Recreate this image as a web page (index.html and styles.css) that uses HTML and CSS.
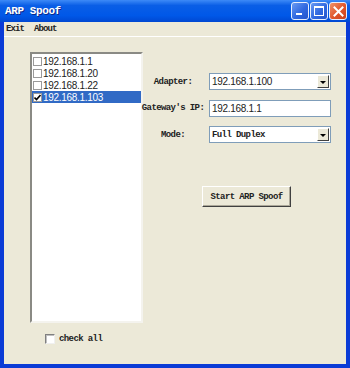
FILE: index.html
```html
<!DOCTYPE html>
<html>
<head>
  <meta charset="utf-8">
  <title>ARP Spoof</title>
  <link rel="stylesheet" href="styles.css">
</head>
<body>
  <div class="window">
    <div class="titlebar">
      <span class="title">ARP Spoof</span>
      <div class="caption-buttons">
        <span class="cap-btn minimize"><span class="min-bar"></span></span>
        <span class="cap-btn maximize"><span class="max-box"></span></span>
        <span class="cap-btn close">
          <svg width="11" height="11" viewBox="0 0 11 11"><path d="M1.5 1.5 L9.5 9.5 M9.5 1.5 L1.5 9.5" stroke="#fff" stroke-width="2" stroke-linecap="square"/></svg>
        </span>
      </div>
    </div>

    <div class="frame">
      <div class="menubar">
        <span class="menu-item">Exit</span>
        <span class="menu-item">About</span>
      </div>

      <div class="client">
        <div class="left-col">
          <div class="listbox">
            <div class="list-row"><span class="box"></span><span class="ip">192.168.1.1</span></div>
            <div class="list-row"><span class="box"></span><span class="ip">192.168.1.20</span></div>
            <div class="list-row"><span class="box"></span><span class="ip">192.168.1.22</span></div>
            <div class="list-row selected">
              <span class="box">
                <svg width="7" height="7" viewBox="0 0 7 7"><path d="M0.5 3.5 L2.5 5.5 L6.5 1" stroke="#000" stroke-width="1.6" fill="none"/></svg>
              </span>
              <span class="ip">192.168.1.103</span>
            </div>
          </div>
          <div class="checkall">
            <span class="check"></span>
            <span class="label">check all</span>
          </div>
        </div>

        <div class="right-col">
          <div class="form">
            <span class="label">Adapter:</span>
            <div class="combo">
              <span class="ip">192.168.1.100</span>
              <span class="drop"><span class="arrow"></span></span>
            </div>

            <span class="label">Gateway's IP:</span>
            <div class="textbox"><span class="ip">192.168.1.1</span></div>

            <span class="label">Mode:</span>
            <div class="combo">
              <span class="label">Full Duplex</span>
              <span class="drop"><span class="arrow"></span></span>
            </div>
          </div>

          <button class="start-btn">Start ARP Spoof</button>
        </div>
      </div>
    </div>
  </div>
</body>
</html>
```

FILE: styles.css
```css
body {
  margin: 0;
  background: #ece9d8;
}

.window {
  width: 350px;
  height: 368px;
  display: flex;
  flex-direction: column;
  background: #0a3bd6;
}

.titlebar {
  height: 22px;
  display: flex;
  align-items: center;
  justify-content: space-between;
  padding: 0 3px 0 5px;
  background: linear-gradient(#3d8af7, #0a5ee6 25%, #0058e8 70%, #0048d2);
  box-sizing: border-box;
}

.title {
  font-family: "Liberation Mono", monospace;
  font-weight: bold;
  font-size: 11px;
  letter-spacing: -0.4px;
  color: #fff;
  text-shadow: 1px 1px 0 #0a2a8a;
}

.caption-buttons {
  display: flex;
  gap: 1px;
}

.cap-btn {
  width: 16px;
  height: 16px;
  border: 1px solid #e8eefc;
  border-radius: 3px;
  background: linear-gradient(135deg, #6a9af2, #3068e0 55%, #2455cc);
  display: flex;
  align-items: center;
  justify-content: center;
  position: relative;
}

.min-bar {
  position: absolute;
  left: 4px;
  bottom: 4px;
  width: 6px;
  height: 2px;
  background: #fff;
}

.max-box {
  width: 8px;
  height: 7px;
  border: 1px solid #fff;
  border-top-width: 2px;
}

.close {
  background: linear-gradient(135deg, #f0936a, #e0552a 55%, #c8401c);
}

.frame {
  flex: 1;
  display: flex;
  flex-direction: column;
  margin: 0 4px 4px 4px;
  background: #ece9d8;
}

.menubar {
  height: 14px;
  display: flex;
  gap: 10px;
  align-items: center;
  padding-left: 2px;
  border-bottom: 1px solid #fff;
}

.menu-item {
  font-family: "Liberation Mono", monospace;
  font-weight: bold;
  font-size: 9px;
  letter-spacing: -0.9px;
  color: #222;
}

.client {
  flex: 1;
  display: flex;
}

.left-col {
  padding: 15px 0 0 26px;
  width: 113px;
}

.listbox {
  height: 271px;
  box-sizing: border-box;
  background: #fff;
  border-top: 2px solid #8a8a84;
  border-left: 2px solid #8a8a84;
  border-right: 2px solid #f4f3ee;
  border-bottom: 2px solid #f4f3ee;
  padding-top: 1px;
}

.list-row {
  height: 12px;
  display: flex;
  align-items: center;
  gap: 1px;
  padding-left: 1px;
}

.list-row.selected {
  background: #316ac5;
  color: #fff;
}

.box {
  width: 7px;
  height: 7px;
  border: 1px solid #9a9a9a;
  background: #fff;
  display: flex;
  align-items: center;
  justify-content: center;
}

.ip {
  font-family: "Liberation Sans", sans-serif;
  font-size: 10px;
  letter-spacing: -0.3px;
  color: #222;
}

.selected .ip {
  color: #fff;
}

.label {
  font-family: "Liberation Mono", monospace;
  font-weight: bold;
  font-size: 9px;
  letter-spacing: -0.6px;
  color: #222;
  white-space: nowrap;
}

.checkall {
  display: flex;
  align-items: center;
  gap: 4px;
  margin: 11px 0 0 15px;
}

.check {
  width: 8px;
  height: 8px;
  background: #fff;
  border-top: 1px solid #808080;
  border-left: 1px solid #808080;
  border-right: 1px solid #f0f0f0;
  border-bottom: 1px solid #f0f0f0;
  box-shadow: inset 1px 1px 0 #c0c0c0;
}

.right-col {
  padding-top: 36px;
  display: flex;
  flex-direction: column;
}

.form {
  display: grid;
  grid-template-columns: 60px 122px;
  column-gap: 6px;
  row-gap: 9.5px;
  align-items: center;
}

.form > .label {
  justify-self: center;
}

.combo,
.textbox {
  height: 17px;
  box-sizing: border-box;
  background: #fff;
  border: 1px solid #7f9db9;
  display: flex;
  align-items: center;
  justify-content: space-between;
  padding-left: 2px;
}

.drop {
  width: 12px;
  height: 13px;
  margin-right: 1px;
  box-sizing: border-box;
  background: #ece9d8;
  border-top: 1px solid #fff;
  border-left: 1px solid #fff;
  border-right: 1px solid #404040;
  border-bottom: 1px solid #404040;
  display: flex;
  align-items: center;
  justify-content: center;
}

.arrow {
  width: 0;
  height: 0;
  border-left: 3px solid transparent;
  border-right: 3px solid transparent;
  border-top: 3px solid #000;
  margin-top: 1px;
}

.start-btn {
  width: 89px;
  height: 21px;
  margin: 43px 0 0 59px;
  padding: 0;
  background: #ece9d8;
  border-top: 1px solid #fff;
  border-left: 1px solid #fff;
  border-right: 1px solid #404040;
  border-bottom: 1px solid #404040;
  box-shadow: inset -1px -1px 0 #aca899;
  font-family: "Liberation Mono", monospace;
  font-weight: bold;
  font-size: 9px;
  letter-spacing: -0.6px;
  color: #222;
}
```
